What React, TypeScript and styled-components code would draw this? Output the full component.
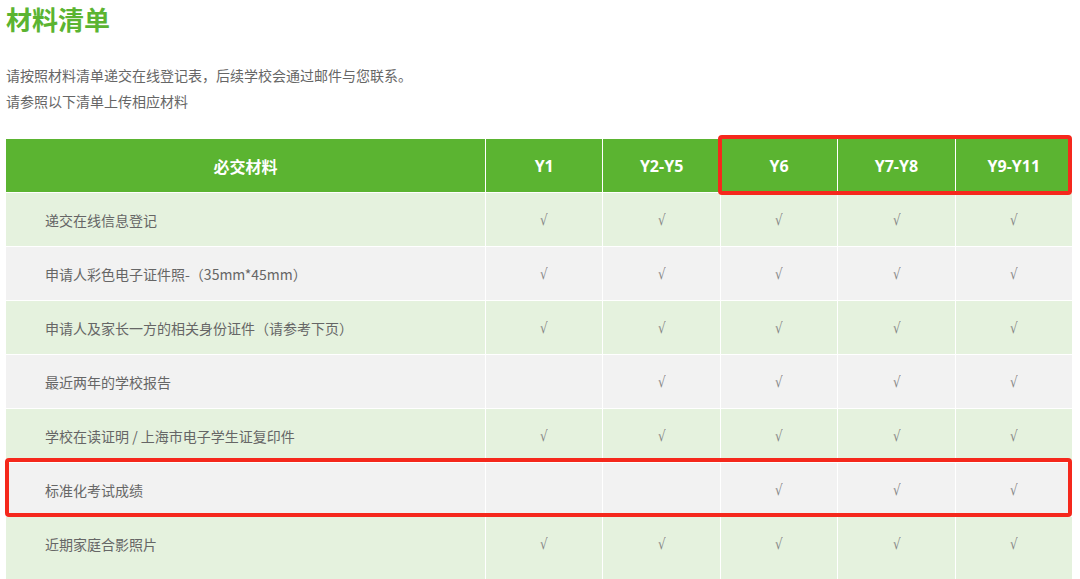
import React from "react";
import styled, { createGlobalStyle } from "styled-components";

const Global = createGlobalStyle`
  html, body { margin: 0; padding: 0; background: #ffffff; }
  body { font-family: "Open Sans", "Noto Sans CJK SC", sans-serif; }
`;

const Page = styled.div`
  padding: 2px 8px 0 6px;
  width: 1066px;
`;

const Title = styled.h1`
  margin: 0;
  font-size: 26px;
  line-height: 34px;
  font-weight: 700;
  color: #5bb431;
  font-family: "Noto Sans CJK SC", sans-serif;
`;

const Intro = styled.div`
  margin-top: 26px;
  font-size: 14px;
  line-height: 26px;
  color: #666666;
  font-family: "Noto Sans CJK SC", sans-serif;
`;

const Grid = styled.div`
  margin-top: 25px;
  display: grid;
  grid-template-columns: 479px repeat(5, 1fr);
  grid-template-rows: repeat(7, 53px) 64px;
  gap: 1px;
  background: #ffffff;
  width: 1066px;
`;

const HeadCell = styled.div<{ $col: number }>`
  grid-row: 1;
  grid-column: ${(p) => p.$col};
  background: #5bb431;
  color: #ffffff;
  font-weight: 700;
  font-size: 16px;
  display: flex;
  align-items: center;
  justify-content: center;
`;

const Cell = styled.div<{ $row: number; $col: number; $alt: boolean; $label?: boolean; $last?: boolean }>`
  grid-row: ${(p) => p.$row};
  grid-column: ${(p) => p.$col};
  background: ${(p) => (p.$alt ? "#f2f2f2" : "#e5f2de")};
  color: ${(p) => (p.$label ? "#666666" : "#888888")};
  font-size: 14px;
  display: flex;
  align-items: center;
  justify-content: ${(p) => (p.$label ? "flex-start" : "center")};
  padding-left: ${(p) => (p.$label ? "39px" : "0")};
  padding-bottom: ${(p) => (p.$last ? "11px" : "0")};
  font-family: "Noto Sans CJK SC", sans-serif;
`;

const Mark = styled.span`
  font-family: "DejaVu Sans", sans-serif;
  font-size: 15px;
  color: #888888;
  transform: scaleX(0.8);
`;

const Highlight = styled.div<{ $area: string; $m: string }>`
  grid-area: ${(p) => p.$area};
  margin: ${(p) => p.$m};
  border: 4px solid #f5281c;
  border-radius: 4px;
  pointer-events: none;
  z-index: 1;
`;

const headers = ["必交材料", "Y1", "Y2-Y5", "Y6", "Y7-Y8", "Y9-Y11"];

const rows: { label: string; marks: boolean[] }[] = [
  { label: "递交在线信息登记", marks: [true, true, true, true, true] },
  { label: "申请人彩色电子证件照-（35mm*45mm）", marks: [true, true, true, true, true] },
  { label: "申请人及家长一方的相关身份证件（请参考下页）", marks: [true, true, true, true, true] },
  { label: "最近两年的学校报告", marks: [false, true, true, true, true] },
  { label: "学校在读证明 / 上海市电子学生证复印件", marks: [true, true, true, true, true] },
  { label: "标准化考试成绩", marks: [false, false, true, true, true] },
  { label: "近期家庭合影照片", marks: [true, true, true, true, true] },
];

export default function App() {
  return (
    <>
      <Global />
      <Page>
        <Title>材料清单</Title>
        <Intro>
          <div>请按照材料清单递交在线登记表，后续学校会通过邮件与您联系。</div>
          <div>请参照以下清单上传相应材料</div>
        </Intro>
        <Grid>
          {headers.map((h, i) => (
            <HeadCell key={h} $col={i + 1}>
              {h}
            </HeadCell>
          ))}
          {rows.map((r, ri) => {
            const alt = ri % 2 === 1;
            const last = ri === rows.length - 1;
            return (
              <React.Fragment key={r.label}>
                <Cell $row={ri + 2} $col={1} $alt={alt} $label $last={last}>
                  {r.label}
                </Cell>
                {r.marks.map((m, mi) => (
                  <Cell key={mi} $row={ri + 2} $col={mi + 2} $alt={alt} $last={last}>
                    {m ? <Mark>√</Mark> : null}
                  </Cell>
                ))}
              </React.Fragment>
            );
          })}
          <Highlight $area="1 / 4 / 2 / 7" $m="-4px 0 -3px -3px" />
          <Highlight $area="7 / 1 / 8 / 7" $m="-5px 0 -1px -1px" />
        </Grid>
      </Page>
    </>
  );
}
